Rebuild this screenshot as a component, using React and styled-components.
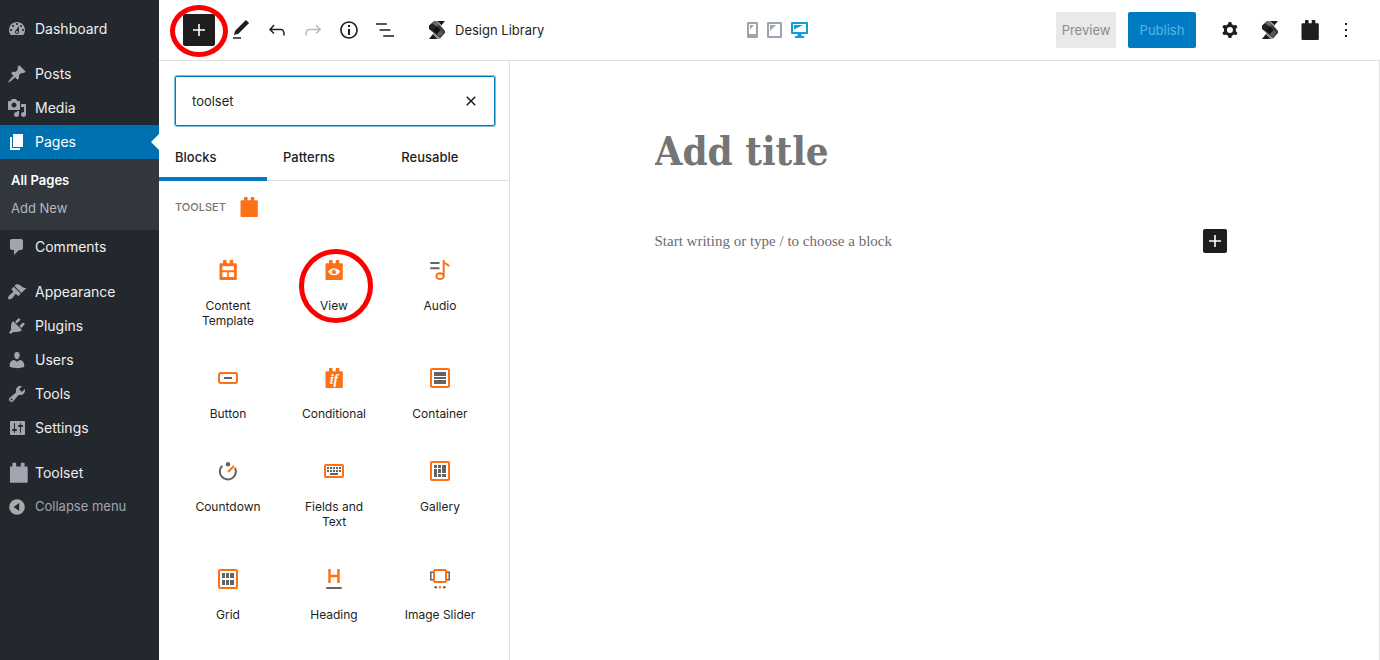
import React from "react";
import styled, { createGlobalStyle, css } from "styled-components";

const GlobalStyle = createGlobalStyle`
  * { box-sizing: border-box; }
  body {
    margin: 0;
    overflow: hidden;
    background: #fff;
    color: #1e1e1e;
    font-family: Inter, "Liberation Sans", sans-serif;
    font-size: 13px;
  }
  button, input { font: inherit; color: inherit; }
  svg { display: block; flex: none; }
`;

/* ---------- icons ---------- */

const Icon = ({ size = 24, box = 24, children, ...rest }) => (
  <svg
    width={size}
    height={size}
    viewBox={`0 0 ${box} ${box}`}
    fill="currentColor"
    fillRule="evenodd"
    aria-hidden="true"
    {...rest}
  >
    {children}
  </svg>
);

const dash = {
  dashboard:
    "M3.76 16h12.48c1.1-1.37 1.76-3.11 1.76-5 0-4.42-3.58-8-8-8s-8 3.58-8 8c0 1.89.66 3.63 1.76 5zM10 4c.55 0 1 .45 1 1s-.45 1-1 1-1-.45-1-1 .45-1 1-1zM6 6c.55 0 1 .45 1 1s-.45 1-1 1-1-.45-1-1 .45-1 1-1zm8 0c.55 0 1 .45 1 1s-.45 1-1 1-1-.45-1-1 .45-1 1-1zm-5.37 5.55L12 7v6c0 1.1-.9 2-2 2s-2-.9-2-2c0-.57.24-1.08.63-1.45zM4 10c.55 0 1 .45 1 1s-.45 1-1 1-1-.45-1-1 .45-1 1-1zm12 0c.55 0 1 .45 1 1s-.45 1-1 1-1-.45-1-1 .45-1 1-1zm-5 3c0-.55-.45-1-1-1s-1 .45-1 1 .45 1 1 1 1-.45 1-1z",
  posts:
    "M10.44 3.02l1.82-1.82 6.36 6.35-1.83 1.82c-1.05-.68-2.48-.57-3.41.36l-.75.75c-.92.93-1.04 2.35-.35 3.41l-1.83 1.82-2.41-2.41-2.8 2.79c-.42.42-3.38 2.71-3.8 2.29s1.86-3.39 2.28-3.81l2.79-2.79L4.1 9.36l1.83-1.82c1.05.69 2.48.57 3.4-.36l.75-.75c.93-.92 1.05-2.35.36-3.41z",
  media:
    "M13 11V4c0-.55-.45-1-1-1h-1.67L9 1H5L3.67 3H2c-.55 0-1 .45-1 1v7c0 .55.45 1 1 1h10c.55 0 1-.45 1-1zM7 4.5c1.38 0 2.5 1.12 2.5 2.5S8.38 9.5 7 9.5 4.5 8.38 4.5 7 5.62 4.5 7 4.5zM14 6h5v10.5c0 1.38-1.12 2.5-2.5 2.5S14 17.88 14 16.5s1.12-2.5 2.5-2.5c.17 0 .34.02.5.05V9h-3V6zm-4 8.05V13h2v3.5c0 1.38-1.12 2.5-2.5 2.5S7 17.88 7 16.5 8.12 14 9.5 14c.17 0 .34.02.5.05z",
  pages: "M6 15V2h10v13H6zm-1 1h8v2H3V5h2v11z",
  comments:
    "M5 2h9c1.1 0 2 .9 2 2v7c0 1.1-.9 2-2 2h-2l-5 5v-5H5c-1.1 0-2-.9-2-2V4c0-1.1.9-2 2-2z",
  appearance:
    "M14.48 11.06L7.41 3.99l1.5-1.5c.5-.56 2.3-.47 3.51.32 1.21.8 1.43 1.28 2.91 2.1 1.18.64 2.45 1.26 4.45.85zm-.71.71L6.7 4.7 4.93 6.47c-.39.39-.39 1.02 0 1.41l1.06 1.06c.39.39.39 1.03 0 1.42-.6.6-1.43 1.11-2.21 1.69-.35.26-.7.53-1.01.84C1.43 14.23.4 16.08 1.4 17.07c.99 1 2.84-.03 4.18-1.36.31-.31.58-.66.85-1.02.57-.78 1.08-1.61 1.69-2.21.39-.39 1.02-.39 1.41 0l1.06 1.06c.39.39 1.02.39 1.41 0z",
  plugins:
    "M13.11 4.36L9.87 7.6 8 5.73l3.24-3.24c.35-.34 1.05-.2 1.56.32.52.51.66 1.21.31 1.55zm-8 1.77l.91-1.12 9.01 9.01-1.19.84c-.71.71-2.63 1.16-3.82 1.16H6.14L4.9 17.26c-.59.59-1.54.59-2.12 0-.59-.58-.59-1.53 0-2.12l1.24-1.24v-3.88c0-1.13.4-3.19 1.09-3.89zm7.26 3.97l3.24-3.24c.34-.35 1.04-.21 1.55.31.52.51.66 1.21.31 1.55l-3.24 3.25z",
  users:
    "M10 9.25c-2.27 0-2.73-3.44-2.73-3.44C7 4.02 7.82 2 9.97 2c2.16 0 2.98 2.02 2.71 3.81 0 0-.41 3.44-2.68 3.44zm0 2.57L12.72 10c2.39 0 4.52 2.33 4.52 4.53v2.49s-3.65 1.13-7.24 1.13c-3.65 0-7.24-1.13-7.24-1.13v-2.49c0-2.25 1.94-4.48 4.47-4.48z",
  tools:
    "M16.68 9.77c-1.34 1.34-3.3 1.67-4.95.99l-5.41 6.52c-.99.99-2.59.99-3.58 0s-.99-2.59 0-3.57l6.52-5.42c-.68-1.65-.35-3.61.99-4.95 1.28-1.28 3.12-1.62 4.72-1.06l-2.89 2.89 2.82 2.82 2.86-2.87c.53 1.58.18 3.39-1.08 4.65zM3.81 16.21c.4.39 1.04.39 1.43 0 .4-.4.4-1.04 0-1.43-.39-.4-1.03-.4-1.43 0-.39.39-.39 1.03 0 1.43z",
  settings:
    "M18 16V4c0-.55-.45-1-1-1H4c-.55 0-1 .45-1 1v12c0 .55.45 1 1 1h13c.55 0 1-.45 1-1zM8 11h1c.55 0 1 .45 1 1s-.45 1-1 1H8v1.5c0 .28-.22.5-.5.5s-.5-.22-.5-.5V13H6c-.55 0-1-.45-1-1s.45-1 1-1h1V5.5c0-.28.22-.5.5-.5s.5.22.5.5V11zm5-2h-1c-.55 0-1-.45-1-1s.45-1 1-1h1V5.5c0-.28.22-.5.5-.5s.5.22.5.5V7h1c.55 0 1 .45 1 1s-.45 1-1 1h-1v5.5c0 .28-.22.5-.5.5s-.5-.22-.5-.5V9z",
  toolset:
    "M3 3.5h2.4V.4q0-.6.6-.6h2.6q.6 0 .6.6v3.1h4.6V.4q0-.6.6-.6H17q.6 0 .6.6v3.1H20q.7 0 .7.7v14.9q0 .7-.7.7H3.7q-.7 0-.7-.7z",
  collapse:
    "M10 2.200a7.800 7.800 0 1 0 0 15.600 7.800 7.800 0 0 0 0-15.600zM12.200 5.900v8.200L6.600 10z",
};

const wp = {
  plus: "M18 11.2h-5.2V6h-1.6v5.2H6v1.6h5.2V18h1.6v-5.2H18z",
  edit: "M20.1 5.1L16.9 2 6.2 12.7l-1.3 4.4 4.5-1.3L20.1 5.1zM4 20.8h8v-1.5H4v1.5z",
  undo: "M18.3 11.7c-.6-.6-1.4-.9-2.3-.9H6.7l2.9-3.3-1.1-1-4.5 5L8.500 16l1-1-2.700-2.700H16c.5 0 .9.2 1.3.5 1 1 1 3.400 1 4.500v.3h1.500v-.2c0-1.500 0-4.300-1.500-5.700z",
  redo: "M15.6 6.5l-1.1 1 2.900 3.300H8c-.9 0-1.700.3-2.300.9-1.400 1.500-1.400 4.200-1.400 5.600v.2h1.500v-.3c0-1.100 0-3.500 1-4.500.3-.3.7-.5 1.300-.5h9.200L14.500 15l1.100 1.100 4.600-4.600-4.600-5z",
  info: "M12 3.200c-4.800 0-8.800 3.900-8.800 8.800 0 4.800 3.900 8.800 8.800 8.800 4.800 0 8.800-3.900 8.800-8.800 0-4.800-4-8.800-8.800-8.800zm0 16c-4 0-7.200-3.300-7.200-7.200C4.800 8 8 4.800 12 4.800s7.200 3.300 7.200 7.200c0 4-3.200 7.200-7.200 7.200zM11 17h2v-6h-2v6zm0-8h2V7h-2v2z",
  list: "M13.800 5.200H3v1.500h10.800V5.200zm-3.600 12v1.500H21v-1.500H10.200zm7.200-6H6.600v1.500h10.800v-1.500z",
  cog: "M10.289 4.836A1 1 0 0111.275 4h1.306a1 1 0 01.987.836l.244 1.466c.787.26 1.503.679 2.108 1.218l1.393-.522a1 1 0 011.216.437l.653 1.13a1 1 0 01-.23 1.273l-1.148.944a6.025 6.025 0 010 2.435l1.149.946a1 1 0 01.23 1.272l-.653 1.13a1 1 0 01-1.216.437l-1.394-.522c-.605.54-1.32.958-2.108 1.218l-.244 1.466a1 1 0 01-.987.836h-1.306a1 1 0 01-.986-.836l-.244-1.466a5.995 5.995 0 01-2.108-1.218l-1.394.522a1 1 0 01-1.217-.436l-.653-1.131a1 1 0 01.23-1.272l1.149-.946a6.026 6.026 0 010-2.435l-1.148-.944a1 1 0 01-.23-1.272l.653-1.131a1 1 0 011.217-.437l1.393.522a5.994 5.994 0 012.108-1.218l.244-1.466zM14.929 12a3 3 0 11-6 0 3 3 0 016 0z",
  more: "M13 19h-2v-2h2v2zm0-6h-2v-2h2v2zm0-6h-2V5h2v2z",
  close:
    "M12 13.060l3.712 3.713 1.061-1.060L13.061 12l3.712-3.712-1.060-1.060L12 10.938 8.288 7.227l-1.061 1.060L10.939 12l-3.712 3.712 1.060 1.061L12 13.061z",
};

const BRICK =
  "M3.500 6.200q0-.9.9-.9h2.600V2.700q0-.7.7-.7h2.200q.7 0 .7.700v2.600h3.100V2.700q0-.7.7-.7h2.200q.7 0 .7.700v2.600h2.600q.9 0 .9.900v14.900q0 .9-.9.900H4.400q-.9 0-.9-.9z";

const WpIcon = ({ name }) => (
  <Icon>
    <path d={wp[name]} />
  </Icon>
);

const BrickIcon = () => (
  <Icon>
    <path d={BRICK} />
  </Icon>
);

const StackIcon = () => (
  <Icon>
    <path fill="#3d3d3d" d="M4 7.800L8.800 3.200h3L20 13v2l-5 5.600L4 11z" />
    <path fill="#6a6a6a" d="M8.800 3.200h3l2.400 3-2.400 2.600L7 5z" />
    <path fill="#222" d="M4 7.800l3-2.600 4.400 3.900L8 13l-4-2.200z" />
    <path fill="#111" d="M11.600 8.200l4 3.800-3.800 4.300L8 12.600z" />
    <path fill="#585858" d="M15.600 12.200l2.600 2.800-3.400 4-3-2.800z" />
    <path fill="#1a1a1a" d="M11.800 3H20l-3.600 4.200z" />
    <path fill="#a0a0a0" d="M11.200 3.200l.9-.2 4.700 4.700-.6.700z" />
    <path fill="#1a1a1a" d="M4 21l4-5 4.400 5z" />
    <path fill="#8a8a8a" d="M8 16l.8-.9 5.800 5.500-.6.400h-1.600z" />
  </Icon>
);

const ORANGE = "#fd7116";
const GRAY = "#636363";

const Frame = ({ x = 3, y = 3, w = 18, h = 18, r = 1 }) => (
  <rect x={x} y={y} width={w} height={h} rx={r} fill="none" stroke={ORANGE} strokeWidth="2" />
);

const Rects = ({ list }) =>
  list.map(([x, y, w, h], i) => <rect key={i} x={x} y={y} width={w} height={h} fill={GRAY} />);

const blockIcons = {
  template: (
    <>
      <path fill={ORANGE} d={BRICK} />
      <path fill="#fff" d="M6.300 8.300H18v4H6.300zM6.300 14.300h5v4.700h-5zM12.900 14.300H18v4.700h-5.100z" />
    </>
  ),
  view: (
    <>
      <path fill={ORANGE} d={BRICK} />
      <path fill="#fff" d="M6 13.700q2.600-3.500 6.100-3.500t6.100 3.500q-2.600 3.500-6.100 3.500T6 13.700z" />
      <circle cx="12.100" cy="13.700" r="2.300" fill={ORANGE} />
      <circle cx="12.900" cy="12.900" r=".7" fill="#fff" />
    </>
  ),
  audio: (
    <g fill="none" strokeWidth="2">
      <path stroke={GRAY} d="M2.300 5h9.200M2.300 10.200h9.200" />
      <path stroke={ORANGE} d="M15.700 2v15.800M15.700 4.500c1 1.500 4.600.8 5 4" />
      <ellipse stroke={ORANGE} cx="12" cy="18.200" rx="3.700" ry="2.900" />
    </g>
  ),
  button: (
    <>
      <Frame y={7} h={10} r={2} />
      <Rects list={[[8, 11, 8, 2]]} />
    </>
  ),
  conditional: (
    <>
      <path fill={ORANGE} d={BRICK} />
      <text
        x="12"
        y="18"
        textAnchor="middle"
        fill="#fff"
        fontFamily="Liberation Serif, serif"
        fontStyle="italic"
        fontWeight="700"
        fontSize="14"
      >
        if
      </text>
    </>
  ),
  container: (
    <>
      <Frame />
      <Rects list={[[6, 6, 12, 4], [6, 11, 12, 2], [6, 14, 12, 4]]} />
    </>
  ),
  countdown: (
    <g fill="none" strokeWidth="2">
      <path stroke={GRAY} d="M6.300 6.700a8 8 0 1 0 12.700 2.200" />
      <circle cx="12" cy="5.300" r="2.200" fill={GRAY} />
      <path stroke={ORANGE} strokeWidth="2.200" d="M12 13l6-6" />
    </g>
  ),
  fields: (
    <>
      <Frame y={6} h={12} />
      <Rects
        list={[
          ...[5, 8, 11, 14, 17].flatMap((x) => [[x, 8, 2, 2], [x, 11, 2, 2]]),
          [8, 14, 8, 2],
        ]}
      />
    </>
  ),
  gallery: (
    <>
      <Frame />
      <Rects
        list={[
          [6, 6, 3, 3], [6, 10, 3, 8], [10, 6, 3, 3], [10, 10, 3, 4],
          [10, 15, 3, 3], [14, 6, 4, 8], [14, 15, 4, 3],
        ]}
      />
    </>
  ),
  grid: (
    <>
      <Frame />
      <Rects
        list={[
          [6, 6, 3, 5], [10, 6, 3, 5], [14, 6, 4, 5],
          [6, 13, 3, 5], [10, 13, 3, 5], [14, 13, 4, 5],
        ]}
      />
    </>
  ),
  heading: (
    <g fill="none" strokeWidth="2">
      <path stroke={ORANGE} strokeWidth="2.400" d="M7.500 2v14M16.500 2v14M7.500 9h9" />
      <path stroke={GRAY} d="M4.300 21h15.400" />
    </g>
  ),
  slider: (
    <>
      <path fill="none" stroke={GRAY} strokeWidth="1.500" d="M5.500 5.200H2.800v7.600h2.700M18.500 5.200h2.700v7.600h-2.700" />
      <Frame x={6} y={3} w={12} h={12} />
      <circle cx="7.700" cy="20.300" r="1.300" fill={GRAY} />
      <circle cx="12" cy="20.300" r="1.300" fill={ORANGE} />
      <circle cx="16.300" cy="20.300" r="1.300" fill={GRAY} />
    </>
  ),
};

/* ---------- layout ---------- */

const Page = styled.div`
  display: flex;
  height: 100vh;
`;

const Sidebar = styled.nav`
  flex: none;
  width: 159px;
  padding-top: 12px;
  background: #23282f;
  color: #eee;
`;

const MenuList = styled.ul`
  display: flex;
  flex-direction: column;
  margin: 0;
  padding: 0;
  list-style: none;
`;

const MenuEntry = styled.li`
  margin-top: ${(p) => (p.$spaced ? "11px" : "0")};
`;

const menuRow = css`
  position: relative;
  display: flex;
  align-items: center;
  gap: 8px;
  width: 100%;
  height: 34px;
  padding: 0 0 0 7px;
  border: 0;
  background: none;
  color: inherit;
  text-decoration: none;
  svg { color: #a0a5b0; overflow: visible; }
`;

const MenuLabel = styled.span`
  padding-bottom: 2px;
`;

const MenuLink = styled.a`
  ${menuRow}
  font-size: 14px;
  ${(p) =>
    p.$active &&
    css`
      background: #0071b0;
      color: #fff;
      svg { color: #fff; }
      &::after {
        content: "";
        position: absolute;
        top: 9px;
        right: 0;
        border: 8px solid transparent;
        border-left: 0;
        border-right-color: #fff;
      }
    `}
`;

const CollapseButton = styled.button`
  ${menuRow}
  color: #a2a5a9;
  svg { color: #aaa; }
`;

const SubMenu = styled.ul`
  margin: 0;
  padding: 7px 0 8px;
  list-style: none;
  background: #32373e;
`;

const SubLink = styled.a`
  display: block;
  padding-left: 11px;
  line-height: 28px;
  text-decoration: none;
  color: ${(p) => (p.$current ? "#fff" : "#b4b9be")};
  font-weight: ${(p) => (p.$current ? 600 : 400)};
`;

const Editor = styled.div`
  display: flex;
  flex: 1;
  flex-direction: column;
  min-width: 0;
`;

const Header = styled.header`
  display: flex;
  flex: none;
  align-items: center;
  height: 61px;
  padding-left: 16px;
  border-bottom: 1px solid #e0e0e0;
`;

const ToolGroup = styled.div`
  display: flex;
  flex: 1;
  align-items: center;
  padding-left: 8px;
`;

const Devices = styled.div`
  display: flex;
  gap: 9px;
  padding-left: 8px;
`;

const DeviceButton = styled.button`
  padding: 0;
  border: 0;
  background: none;
  color: ${(p) => (p.$active ? "#0f9fd8" : "#9ba5b0")};
`;

const ActionGroup = styled.div`
  display: flex;
  flex: 1;
  align-items: center;
  justify-content: flex-end;
  padding-right: 16px;
`;

const IconButton = styled.button`
  display: flex;
  flex: none;
  align-items: center;
  justify-content: center;
  width: 36px;
  height: 36px;
  padding: 0;
  border: 0;
  background: none;
  color: ${(p) => (p.disabled ? "#b9b9b9" : "#1e1e1e")};
`;

const InsertButton = styled.button`
  position: relative;
  display: flex;
  flex: none;
  align-items: center;
  justify-content: center;
  width: ${(p) => p.$size}px;
  height: ${(p) => p.$size}px;
  padding: 0;
  border: 0;
  border-radius: 2px;
  background: #1e1e1e;
  color: #fff;
`;

const HeaderTools = styled.div`
  display: flex;
  margin-left: 8px;
`;

const LibraryButton = styled.button`
  display: flex;
  align-items: center;
  gap: 6px;
  height: 36px;
  margin-left: 16px;
  padding: 0 6px;
  border: 0;
  background: none;
  white-space: nowrap;
`;

const TextButton = styled.button`
  height: 36px;
  width: ${(p) => (p.$primary ? "68px" : "60px")};
  margin-right: ${(p) => (p.$primary ? "16px" : "12px")};
  padding: 0;
  border: 0;
  border-radius: 2px;
  background: ${(p) => (p.$primary ? "#007bc3" : "#e9e9e9")};
  color: ${(p) => (p.$primary ? "#5ab4e2" : "#8c8c8c")};
`;

const PinnedTools = styled.div`
  display: flex;
  gap: 4px;
`;

const Body = styled.div`
  display: flex;
  flex: 1;
  min-height: 0;
`;

const Inserter = styled.aside`
  flex: none;
  width: 351px;
  overflow: hidden;
  border-right: 1px solid #e0e0e0;
`;

const SearchBox = styled.div`
  display: flex;
  align-items: center;
  height: 50px;
  margin: 15px 14px 0 16px;
  padding: 0 11px 0 16px;
  border: 1px solid #007cba;
  border-radius: 2px;
  box-shadow: 0 0 0 1px #7fbddc;
`;

const SearchInput = styled.input`
  flex: 1;
  min-width: 0;
  padding: 0;
  border: 0;
  outline: 0;
  background: none;
`;

const ClearButton = styled.button`
  padding: 0;
  border: 0;
  background: none;
`;

const Tabs = styled.div`
  display: flex;
  margin-top: 7px;
  border-bottom: 1px solid #e0e0e0;
`;

const Tab = styled.button`
  flex: 1 1 auto;
  height: 48px;
  margin-bottom: -1px;
  padding: 0 16px;
  border: 0;
  background: none;
  box-shadow: ${(p) => (p.$active ? "inset 0 -4px #007bc3" : "none")};
  text-align: left;
  font-weight: 500;
`;

const Category = styled.h2`
  display: flex;
  align-items: center;
  gap: 11px;
  height: 24px;
  margin: 14px 16px 19px;
  color: #757575;
  font-size: 11px;
  font-weight: 500;
  text-transform: uppercase;
  svg { color: ${ORANGE}; }
`;

const BlockGrid = styled.div`
  display: grid;
  grid-template-columns: repeat(3, 1fr);
  padding: 0 16px;
`;

const BlockButton = styled.button`
  position: relative;
  display: flex;
  flex-direction: column;
  align-items: center;
  gap: 16px;
  padding: 20px 16px 18px;
  border: 0;
  background: none;
  font-size: 12px;
  line-height: 15px;
`;

const Marker = styled.span`
  position: absolute;
  border: 5px solid #fb0000;
  border-radius: 50%;
  pointer-events: none;
  ${(p) =>
    p.$on === "toolbar"
      ? "inset: -9px -13px -11px;"
      : "top: 11px; left: 18px; width: 74px; height: 74px;"}
`;

const Canvas = styled.main`
  flex: 1;
  min-width: 0;
  border-right: 1px solid #e0e0e0;
`;

const Document = styled.div`
  max-width: 580px;
  margin: 0 auto;
  padding-top: 60px;
`;

const TitleInput = styled.input`
  display: block;
  width: 100%;
  height: 58px;
  padding: 0;
  border: 0;
  outline: 0;
  font-family: "DejaVu Serif Condensed", "DejaVu Serif", serif;
  font-size: 40px;
  font-weight: 700;
  &::placeholder { color: #757575; opacity: 1; }
`;

const Paragraph = styled.div`
  display: flex;
  align-items: center;
  margin-top: 50px;
  padding-right: 8px;
`;

const ParagraphInput = styled.input`
  flex: 1;
  min-width: 0;
  padding: 0;
  border: 0;
  outline: 0;
  font-family: "Liberation Serif", serif;
  font-size: 15px;
  &::placeholder { color: #6c6c6c; opacity: 1; }
`;

/* ---------- content ---------- */

const MENU = [
  { id: "dashboard", label: "Dashboard" },
  { id: "posts", label: "Posts", spaced: true },
  { id: "media", label: "Media" },
  { id: "pages", label: "Pages", active: true, sub: ["All Pages", "Add New"] },
  { id: "comments", label: "Comments" },
  { id: "appearance", label: "Appearance", spaced: true },
  { id: "plugins", label: "Plugins" },
  { id: "users", label: "Users" },
  { id: "tools", label: "Tools" },
  { id: "settings", label: "Settings" },
  { id: "toolset", label: "Toolset", spaced: true },
];

const BLOCKS = [
  ["template", "Content Template"],
  ["view", "View"],
  ["audio", "Audio"],
  ["button", "Button"],
  ["conditional", "Conditional"],
  ["container", "Container"],
  ["countdown", "Countdown"],
  ["fields", "Fields and Text"],
  ["gallery", "Gallery"],
  ["grid", "Grid"],
  ["heading", "Heading"],
  ["slider", "Image Slider"],
];

export default function App() {
  return (
    <Page>
      <GlobalStyle />
      <Sidebar aria-label="Main menu">
        <MenuList>
          {MENU.map((m) => (
            <MenuEntry key={m.id} $spaced={m.spaced}>
              <MenuLink href="#" $active={m.active}>
                <Icon size={20} box={20}>
                  <path d={dash[m.id]} />
                </Icon>
                <MenuLabel>{m.label}</MenuLabel>
              </MenuLink>
              {m.sub && (
                <SubMenu>
                  {m.sub.map((s, i) => (
                    <li key={s}>
                      <SubLink href="#" $current={i === 0}>{s}</SubLink>
                    </li>
                  ))}
                </SubMenu>
              )}
            </MenuEntry>
          ))}
          <MenuEntry>
            <CollapseButton>
              <Icon size={20} box={20}>
                <path d={dash.collapse} />
              </Icon>
              <MenuLabel>Collapse menu</MenuLabel>
            </CollapseButton>
          </MenuEntry>
        </MenuList>
      </Sidebar>

      <Editor>
        <Header>
          <ToolGroup>
            <InsertButton $size={32} aria-label="Add block">
              <WpIcon name="plus" />
              <Marker $on="toolbar" />
            </InsertButton>
            <HeaderTools>
              <IconButton aria-label="Edit"><WpIcon name="edit" /></IconButton>
              <IconButton aria-label="Undo"><WpIcon name="undo" /></IconButton>
              <IconButton aria-label="Redo" disabled><WpIcon name="redo" /></IconButton>
              <IconButton aria-label="Details"><WpIcon name="info" /></IconButton>
              <IconButton aria-label="List view"><WpIcon name="list" /></IconButton>
            </HeaderTools>
            <LibraryButton>
              <StackIcon />
              Design Library
            </LibraryButton>
          </ToolGroup>

          <Devices>
            <DeviceButton aria-label="Mobile">
              <svg width="11" height="16" viewBox="0 0 11 16" fill="currentColor" fillRule="evenodd">
                <path d="M1 0h9q1 0 1 1v14q0 1-1 1H1q-1 0-1-1V1q0-1 1-1zM2 2v10h7V2z" />
                <path d="M3 3h4L3 7.500z" />
              </svg>
            </DeviceButton>
            <DeviceButton aria-label="Tablet">
              <svg width="15" height="16" viewBox="0 0 15 16" fill="currentColor" fillRule="evenodd">
                <path d="M1 0h13q1 0 1 1v14q0 1-1 1H1q-1 0-1-1V1q0-1 1-1zM2 2v12h11V2z" />
                <path d="M3 3h6L3 9z" />
              </svg>
            </DeviceButton>
            <DeviceButton aria-label="Desktop" $active>
              <svg width="17" height="16" viewBox="0 0 17 16" fill="currentColor" fillRule="evenodd">
                <path d="M1 0h15q1 0 1 1v10q0 1-1 1h-5.500v2H13v2H4v-2h2.500v-2H1q-1 0-1-1V1q0-1 1-1zM2 2v8h13V2z" />
                <path d="M3 3h9L3 7.500z" />
              </svg>
            </DeviceButton>
          </Devices>

          <ActionGroup>
            <TextButton>Preview</TextButton>
            <TextButton $primary>Publish</TextButton>
            <PinnedTools>
              <IconButton aria-label="Settings"><WpIcon name="cog" /></IconButton>
              <IconButton aria-label="Stackable"><StackIcon /></IconButton>
              <IconButton aria-label="Toolset"><BrickIcon /></IconButton>
            </PinnedTools>
            <IconButton aria-label="Options"><WpIcon name="more" /></IconButton>
          </ActionGroup>
        </Header>

        <Body>
          <Inserter>
            <SearchBox>
              <SearchInput aria-label="Search for a block" defaultValue="toolset" />
              <ClearButton aria-label="Reset search"><WpIcon name="close" /></ClearButton>
            </SearchBox>
            <Tabs role="tablist">
              <Tab role="tab" aria-selected="true" $active>Blocks</Tab>
              <Tab role="tab" aria-selected="false">Patterns</Tab>
              <Tab role="tab" aria-selected="false">Reusable</Tab>
            </Tabs>
            <Category>
              Toolset
              <BrickIcon />
            </Category>
            <BlockGrid>
              {BLOCKS.map(([id, label]) => (
                <BlockButton key={id}>
                  <Icon>{blockIcons[id]}</Icon>
                  {label}
                  {id === "view" && <Marker $on="block" />}
                </BlockButton>
              ))}
            </BlockGrid>
          </Inserter>

          <Canvas>
            <Document>
              <TitleInput aria-label="Add title" placeholder="Add title" />
              <Paragraph>
                <ParagraphInput
                  aria-label="Paragraph"
                  placeholder="Start writing or type / to choose a block"
                />
                <InsertButton $size={24} aria-label="Add block here">
                  <WpIcon name="plus" />
                </InsertButton>
              </Paragraph>
            </Document>
          </Canvas>
        </Body>
      </Editor>
    </Page>
  );
}
